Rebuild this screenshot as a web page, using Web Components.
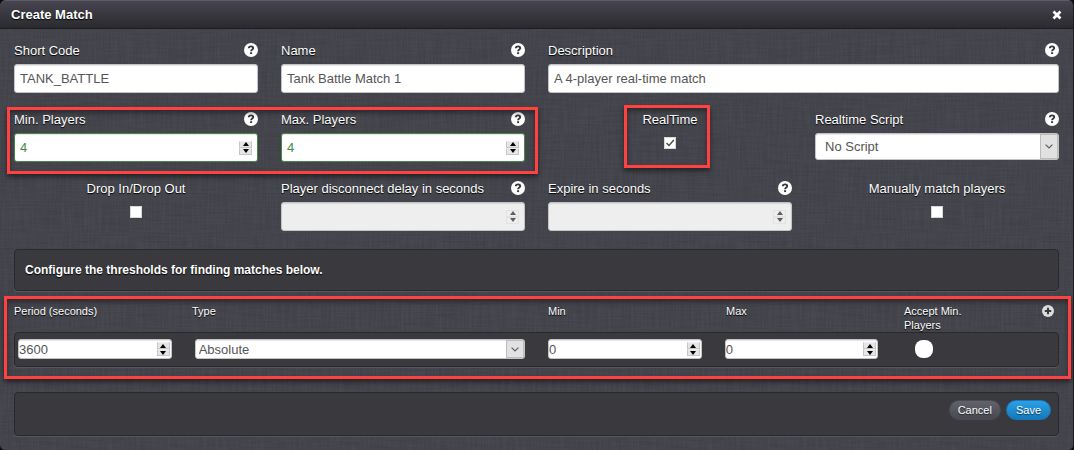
<!DOCTYPE html>
<html lang="en">
<head>
<meta charset="utf-8">
<title>Create Match</title>
<style>
html{background:#0c0c0e}
body{margin:0;font-family:"Liberation Sans",Arial,sans-serif;font-size:13px;color:#fff}
</style>
</head>
<body>
<match-dialog></match-dialog>

<template id="t-dialog">
<style>
:host{display:block}
*{box-sizing:border-box}
section{border-radius:6px;border-right:1px solid #1c1c20;border-bottom:1px solid #1c1c20;overflow:hidden;background-color:#44444c;
background-image:
url("data:image/svg+xml,%3Csvg xmlns='http://www.w3.org/2000/svg' width='300' height='300'%3E%3Cfilter id='a' x='0' y='0' width='1' height='1'%3E%3CfeTurbulence type='fractalNoise' baseFrequency='.03 .6' numOctaves='2' stitchTiles='stitch'/%3E%3CfeColorMatrix values='0 0 0 0 0 0 0 0 0 0 0 0 0 0 0 .9 0 0 0 -.3'/%3E%3C/filter%3E%3Crect width='300' height='300' filter='url(%23a)' opacity='.17'/%3E%3C/svg%3E"),
url("data:image/svg+xml,%3Csvg xmlns='http://www.w3.org/2000/svg' width='300' height='300'%3E%3Cfilter id='a' x='0' y='0' width='1' height='1'%3E%3CfeTurbulence type='fractalNoise' baseFrequency='.6 .03' numOctaves='2' stitchTiles='stitch'/%3E%3CfeColorMatrix values='0 0 0 0 1 0 0 0 0 1 0 0 0 0 1 .9 0 0 0 -.3'/%3E%3C/filter%3E%3Crect width='300' height='300' filter='url(%23a)' opacity='.07'/%3E%3C/svg%3E")}
header{display:flex;align-items:center;justify-content:space-between;height:29px;padding:0 11px;border-top:1px solid #5c5b66;border-bottom:1px solid #1d1d20;background:linear-gradient(#464550,#2a2a2e)}
h1{margin:0;font-size:13px;line-height:16px;text-shadow:0 1px 1px #000}
.close{padding:0;border:0;background:none;display:flex}
form{padding:11px 14px 14px}
.fields{display:grid;grid-template-columns:repeat(4,1fr);column-gap:23px;row-gap:16px}
.wide{grid-column:span 2}
.c1{grid-column:1}.c2{grid-column:2}.c3{grid-column:3}.c4{grid-column:4}
.r2{grid-row:2}.r3{grid-row:3}
.m1{grid-area:2/1/3/3;margin:-2px -13px -12px -7px}
.m2{grid-area:2/3/3/4;margin:-4px 82px -6px 76px}
.intro{margin-top:18px;height:42px;display:flex;align-items:center;padding:0 10px;font-size:12px;font-weight:bold;text-shadow:0 1px 1px #000}
.thresholds{display:block;position:relative;margin-top:12px}
.m3{position:absolute;inset:-7px -12px -12px -10px}
.bar{margin-top:25px;height:44px;display:flex;justify-content:flex-end;align-items:flex-start;gap:5px;padding:7px 7px 0}
</style>
<section>
<header><h1>Create Match</h1>
<button class="close" aria-label="Close"><svg width="10" height="10" viewBox="0 0 10 10"><path d="M1.5 1.5l7 7M8.5 1.5l-7 7" stroke="#fff" stroke-width="2.8"/></svg></button></header>
<form>
<div class="fields">
<text-field label="Short Code" value="TANK_BATTLE"></text-field>
<text-field label="Name" value="Tank Battle Match 1"></text-field>
<text-field class="wide" label="Description" value="A 4-player real-time match"></text-field>
<number-field class="c1 r2" label="Min. Players" value="4" valid></number-field>
<number-field class="c2 r2" label="Max. Players" value="4" valid></number-field>
<check-field class="c3 r2" label="RealTime" checked></check-field>
<select-field class="c4 r2" label="Realtime Script" value="No Script"></select-field>
<check-field class="c1 r3" label="Drop In/Drop Out"></check-field>
<number-field class="c2 r3" label="Player disconnect delay in seconds" disabled></number-field>
<number-field class="c3 r3" label="Expire in seconds" disabled></number-field>
<check-field class="c4 r3" label="Manually match players"></check-field>
<highlight-box class="m1"></highlight-box>
<highlight-box class="m2"></highlight-box>
</div>
<inset-panel class="intro">Configure the thresholds for finding matches below.</inset-panel>
<div class="thresholds"><threshold-list></threshold-list><highlight-box class="m3"></highlight-box></div>
<inset-panel class="bar"><pill-button>Cancel</pill-button><pill-button primary>Save</pill-button></inset-panel>
</form>
</section>
</template>

<template id="t-list">
<style>
:host{display:block}
*{box-sizing:border-box}
.grid{display:grid;grid-template-columns:repeat(6,1fr);column-gap:23px}
.two{grid-column:span 2}
.head{height:29px;padding-top:1px;font-size:11px;line-height:14px;text-shadow:0 1px 1px #000}
.last{display:flex;justify-content:space-between;align-items:flex-start}
.last span{width:64px}
.add{border:0;background:none;padding:1px 5px 0 0;display:flex}
.row{padding:6px 3px;height:35px;align-items:start}
.round{appearance:none;width:18px;height:18px;margin:1px 0 0 14px;border-radius:8px;background:#fff;display:block}
</style>
<div class="grid head">
<span>Period (seconds)</span><span class="two">Type</span><span>Min</span><span>Max</span>
<div class="last"><span>Accept Min. Players</span><button type="button" class="add" aria-label="Add threshold"><svg width="12" height="12" viewBox="0 0 12 12"><circle cx="6" cy="6" r="6" fill="#ddd"/><path d="M6 2.8v6.4M2.8 6h6.4" stroke="#3a3a40" stroke-width="2"/></svg></button></div>
</div>
<inset-panel class="grid row">
<number-box small value="3600" name="Period (seconds)"></number-box>
<select-box class="two" small value="Absolute" name="Type"></select-box>
<number-box small value="0" name="Min"></number-box>
<number-box small value="0" name="Max"></number-box>
<input type="checkbox" class="round" aria-label="Accept Min. Players">
</inset-panel>
</template>

<script>
const base = `*{box-sizing:border-box}
.box{display:block;width:100%;height:29px;margin:0;padding:0 5px;border:1px solid #c4c4c8;border-radius:3px;background:#fff;color:#555;font:13px "Liberation Sans",Arial,sans-serif;box-shadow:inset 0 1px 1px rgba(0,0,0,.1);outline:0}`;
const fieldCss = base + `:host{display:block;min-width:0}
.top{display:flex;justify-content:space-between;align-items:center;height:20px;margin-bottom:4px}
label{padding-top:2px;font-size:13px;line-height:16px;white-space:nowrap;text-shadow:0 1px 1px #000}`;
const esc = (el, n) => (el.getAttribute(n) || '').replace(/"/g, '&quot;');
const define = (name, render, after) => customElements.define(name, class extends HTMLElement {
  constructor() { super(); this.attachShadow({mode: 'open', delegatesFocus: true}); }
  connectedCallback() {
    this.shadowRoot.innerHTML = render(this);
    if (after) after(this, this.shadowRoot);
  }
});

define('help-icon', () => `<style>:host{display:block;width:14px;height:14px}svg{display:block}</style>
<svg width="14" height="14" viewBox="0 0 14 14" role="img" aria-label="Help"><circle cx="7" cy="7" r="7" fill="#fff"/><path d="M4.8 5.3C4.9 3.9 5.8 3.4 7 3.4c1.300 0 2.200.7 2.200 1.800C9.200 6.600 7.100 6.500 7.100 8.300" fill="none" stroke="#36363c" stroke-width="1.900"/><path d="M6.100 9.200h2v1.900h-2z" fill="#36363c"/></svg>`);

define('highlight-box', () => `<style>:host{display:block;pointer-events:none;border:3px solid #ff4141;box-shadow:0 3px 5px rgba(0,0,0,.5),inset 0 3px 5px rgba(0,0,0,.4);z-index:1}</style>`);

define('inset-panel', () => `<style>:host{box-sizing:border-box;background:#39393e;border:1px solid #29292d;border-radius:4px;box-shadow:0 1px 0 #56565e}</style><slot></slot>`);

define('pill-button', el => `<style>:host{display:block}
button{display:block;height:20px;padding:0 8px;border:1px solid #4b4b54;border-radius:10px;color:#fff;font:11px/16px "Liberation Sans",Arial,sans-serif;text-shadow:0 1px 1px rgba(0,0,0,.6);background:linear-gradient(#62626c,#484851)}
:host([primary]) button{padding:0 9px;border-color:#1877b4;background:linear-gradient(#2ba0e6,#1578bb)}</style>
<button type="button"><slot></slot></button>`);

define('number-box', el => `<style>${base}
:host{display:block;position:relative;min-width:0}
.box{appearance:textfield;-moz-appearance:textfield}
.box::-webkit-inner-spin-button{appearance:none;display:none}
:host([small]) .box{height:20px;padding:0}
:host([valid]) .box{border-color:#468847;color:#468847}
.box:disabled{background:#eee}
.step{position:absolute;top:0;bottom:0;right:6px;display:flex;flex-direction:column;justify-content:center}
:host([small]) .step{right:2px}
.step button{display:flex;align-items:center;justify-content:center;width:13px;height:7px;padding:0;border:1px solid #c6c6c6;border-top-color:#eee;background:#e6e6e6}
.step button:disabled{border-color:#dcdcdc;background:#eee;opacity:.6}
svg{display:block;flex:none}
</style><input class="box" id="i" type="number" value="${esc(el, 'value')}" aria-label="${esc(el, 'name')}" ${el.hasAttribute('disabled') ? 'disabled' : ''}>
<div class="step">${['M3 0L6 4H0z', 'M3 4L6 0H0z'].map((d, i) => `<button type="button" tabindex="-1" aria-label="${i ? 'Decrease' : 'Increase'}" ${el.hasAttribute('disabled') ? 'disabled' : ''}><svg width="6" height="4" viewBox="0 0 6 4"><path d="${d}" fill="#000"/></svg></button>`).join('')}</div>`,
(el, root) => {
  const input = root.querySelector('input'), [up, down] = root.querySelectorAll('button');
  up.onclick = () => input.stepUp();
  down.onclick = () => input.stepDown();
});

define('select-box', el => `<style>${base}
:host{display:block;position:relative;min-width:0}
.box{appearance:none;height:27px;padding:0 24px 0 9px}
:host([small]) .box{height:20px;padding:0 20px 0 3px}
.arrow{position:absolute;top:1px;right:1px;bottom:1px;width:18px;display:flex;align-items:center;justify-content:center;background:#e1e1e1;border:1px solid #bcbcbc;pointer-events:none}
</style><select class="box" aria-label="${esc(el, 'name')}"><option>${esc(el, 'value')}</option></select>
<span class="arrow"><svg width="8" height="5" viewBox="0 0 8 5"><path d="M.6.6L4 4 7.400.6" fill="none" stroke="#606060" stroke-width="1.200"/></svg></span>`);

define('text-field', el => `<style>${fieldCss}</style>
<div class="top"><label for="i">${esc(el, 'label')}</label><help-icon></help-icon></div>
<input class="box" id="i" type="text" value="${esc(el, 'value')}">`);

define('number-field', el => `<style>${fieldCss}</style>
<div class="top"><label for="i">${esc(el, 'label')}</label><help-icon></help-icon></div>
<number-box id="i" name="${esc(el, 'label')}" value="${esc(el, 'value')}" ${el.hasAttribute('valid') ? 'valid' : ''} ${el.hasAttribute('disabled') ? 'disabled' : ''}></number-box>`,
(el, root) => root.querySelector('label').onclick = () => root.querySelector('number-box').focus());

define('select-field', el => `<style>${fieldCss}</style>
<div class="top"><label for="i">${esc(el, 'label')}</label><help-icon></help-icon></div>
<select-box id="i" name="${esc(el, 'label')}" value="${esc(el, 'value')}"></select-box>`,
(el, root) => root.querySelector('label').onclick = () => root.querySelector('select-box').focus());

define('check-field', el => `<style>${fieldCss}
:host{text-align:center}
.top{justify-content:center}
input{appearance:none;display:block;width:12px;height:12px;margin:8px auto 0;background:#fff;border:1px solid #d8d8d8}
input:checked{background:#fff url("data:image/svg+xml,%3Csvg xmlns='http://www.w3.org/2000/svg' viewBox='0 0 10 10'%3E%3Cpath d='M1.500 5l2.500 2.500L8.800 2' fill='none' stroke='%23444' stroke-width='1.300'/%3E%3C/svg%3E") center/10px no-repeat}
</style><div class="top"><label for="i">${esc(el, 'label')}</label></div>
<input type="checkbox" id="i" ${el.hasAttribute('checked') ? 'checked' : ''}>`);

const fromTemplate = id => () => document.getElementById(id).innerHTML;
define('threshold-list', fromTemplate('t-list'));
define('match-dialog', fromTemplate('t-dialog'));
</script>
</body>
</html>
